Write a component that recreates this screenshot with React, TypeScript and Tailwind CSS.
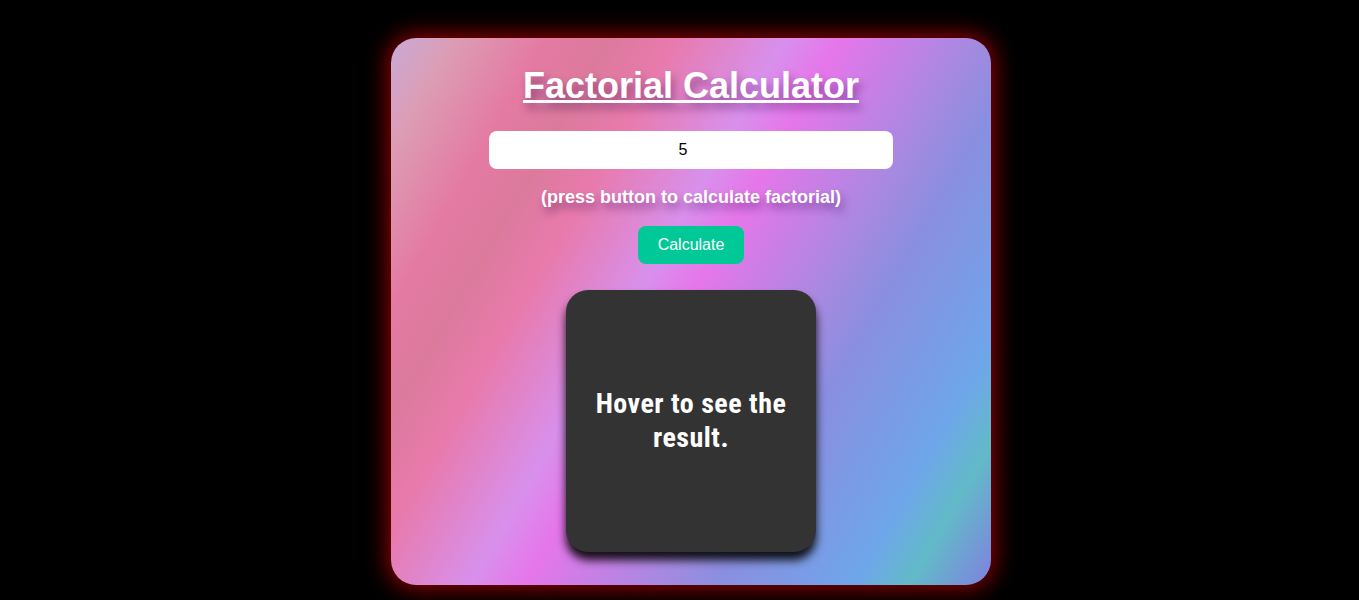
import React, { useState } from 'react';

// 階乗を計算
const factorial = (n: number): string => {
  if (n < 0 || !Number.isFinite(n)) return 'Invalid input';
  let r = BigInt(1);
  for (let i = 2; i <= Math.floor(n); i++) r *= BigInt(i);
  return r.toString();
};

export default function App() {
  const [value, setValue] = useState('5');
  const [result, setResult] = useState<string | null>(null);
  const [hover, setHover] = useState(false);

  return (
    <div className="min-h-screen bg-black pl-[23px] pt-[38px] pb-10 flex justify-center font-['Liberation_Sans',Arial,sans-serif]">
      <div className="w-[600px] h-[547px] rounded-[25px] shadow-[0_0_22px_4px_rgba(255,0,0,0.55)] bg-[linear-gradient(120deg,#c9aad8_0%,#dc9db4_7%,#e47aa2_17%,#dc7a9c_24%,#e87aac_31%,#d890ec_43%,#e676ea_49%,#a48ae0_64%,#8a8ee0_70%,#6ea6ea_85%,#62bac8_91%,#8080e0_100%)] flex flex-col items-center pt-[27px]">
        <h1 className="text-[36px] font-bold text-white underline leading-[41px] [text-shadow:3px_6px_8px_rgba(50,0,80,0.45)]">
          Factorial Calculator
        </h1>

        <input
          type="number"
          value={value}
          onChange={e => setValue(e.target.value)}
          className="mt-[25px] w-[404px] h-[38px] rounded-lg bg-white text-center text-[16px] text-black outline-none pr-4 [appearance:textfield] [&::-webkit-inner-spin-button]:appearance-none"
        />

        <p className="mt-[18px] text-[18px] font-bold text-white leading-[21px] [text-shadow:3px_6px_8px_rgba(50,0,80,0.45)]">
          (press button to calculate factorial)
        </p>

        <button
          onClick={() => setResult(factorial(Number(value)))}
          className="mt-[18px] h-[38px] px-5 rounded-lg bg-[#00c896] text-white text-[16px]"
        >
          Calculate
        </button>

        {/* 結果カード */}
        <div
          onMouseEnter={() => setHover(true)}
          onMouseLeave={() => setHover(false)}
          className="mt-[26px] w-[250px] h-[262px] rounded-[22px] bg-[#333333] shadow-[0_8px_10px_rgba(0,0,0,0.9)] flex items-center justify-center px-5"
        >
          <span className="text-white font-bold text-[28px] leading-[34px] tracking-[0.5px] text-center font-['Roboto',sans-serif] [font-stretch:87.5%] break-words">
            {hover && result ? result : 'Hover to see the result.'}
          </span>
        </div>
      </div>
    </div>
  );
}
